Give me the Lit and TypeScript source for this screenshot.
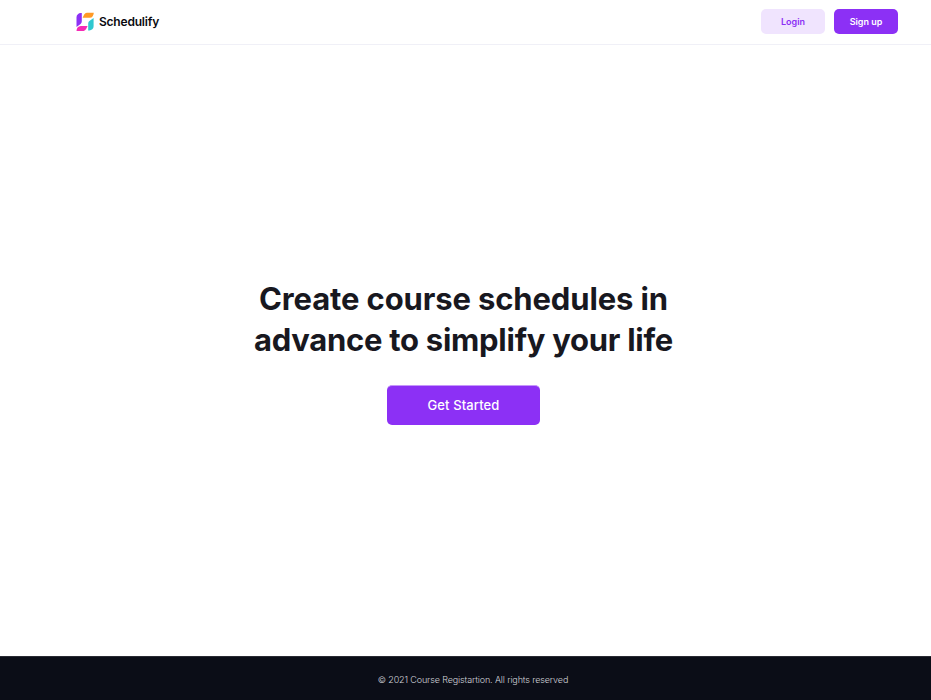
import { LitElement, html, css } from "lit";
import { customElement } from "lit/decorators.js";

@customElement("app-root")
export class AppRoot extends LitElement {
  static styles = css`
    :host {
      display: flex;
      flex-direction: column;
      height: 100vh;
      background: #fff;
      font-family: Inter, "Liberation Sans", sans-serif;
      color: #18181f;
    }
    * { box-sizing: border-box; }
    header {
      display: flex;
      align-items: center;
      justify-content: space-between;
      height: 45px;
      flex: none;
      padding: 0 33px 1px 76px;
      border-bottom: 1px solid #f0f0f7;
    }
    .brand { display: flex; align-items: center; gap: 5px; }
    .logo { display: block; width: 18px; height: 20px; }
    .name { font-size: 12px; font-weight: 600; color: #0a0a0f; line-height: 20px; letter-spacing: -0.21px; }
    .actions { display: flex; gap: 9px; }
    button {
      border: 0;
      padding: 0;
      font: inherit;
      white-space: nowrap;
      color: #fff;
      background: #8c30f5;
      border-radius: 5px;
    }
    .small { width: 64px; height: 25px; font-size: 9px; font-weight: 600; line-height: 25px; }
    .soft { background: #f0e4fe; color: #8c30f5; }
    main {
      flex: 1;
      display: flex;
      flex-direction: column;
      align-items: center;
      padding: 233px 4px 0 0;
    }
    h1 {
      margin: 0;
      text-align: center;
      font-size: 31px;
      line-height: 41px;
      font-weight: 700;
      white-space: nowrap;
    }
    h1 span { display: block; letter-spacing: -0.13px; }
    h1 span + span { letter-spacing: -0.27px; }
    .cta {
      margin-top: 25px;
      width: 153px;
      height: 40px;
      padding-bottom: 1px;
      border-top: 1px solid #c597fa;
      font-size: 13px;
      font-weight: 500;
      letter-spacing: 0.12px;
    }
    footer {
      height: 44px;
      flex: none;
      display: flex;
      align-items: center;
      justify-content: center;
      padding: 1px 0 0 15px;
      background: #0b0d17;
      color: #d2d3d9;
      font-size: 9px;
      font-weight: 300;
      letter-spacing: -0.13px;
      border-top: 1px solid #292a33;
    }
  `;

  render() {
    return html`
      <header>
        <div class="brand">
          <svg class="logo" viewBox="0 0 18 20" aria-hidden="true">
            <path fill="#8c30f5" d="M4.6 1.1H5.8V9.2Q5.8 11 4.6 12L.5 15.1V5.2Q.5 3.3 1.9 2.2Q3.1 1.1 4.6 1.1Z" />
            <path fill="#ff9a26" d="M10.8 .8H17.8Q17.7 2.8 16.7 4.2Q15.7 5.8 13.8 5.8H6.6L8.2 2.6Q9.1 .8 10.8 .8Z" />
            <path fill="#30c8d0" d="M17.6 6V14.2Q17.6 16.2 16.3 17.3Q15.1 18.4 13.4 18.4H12.2V11.4Q12.2 10 13.4 9.1Z" />
            <path fill="#f52bb5" d="M4.7 13.9H11.6L10.1 17.1Q9.3 18.9 7.6 18.9H.5Q.6 16.9 1.6 15.5Q2.8 13.9 4.7 13.9Z" />
          </svg>
          <span class="name">Schedulify</span>
        </div>
        <div class="actions">
          <button class="small soft">Login</button>
          <button class="small">Sign up</button>
        </div>
      </header>
      <main>
        <h1><span>Create course schedules in</span><span>advance to simplify your life</span></h1>
        <button class="cta">Get Started</button>
      </main>
      <footer><span>© 2021 Course Registartion. All rights reserved</span></footer>
    `;
  }
}
